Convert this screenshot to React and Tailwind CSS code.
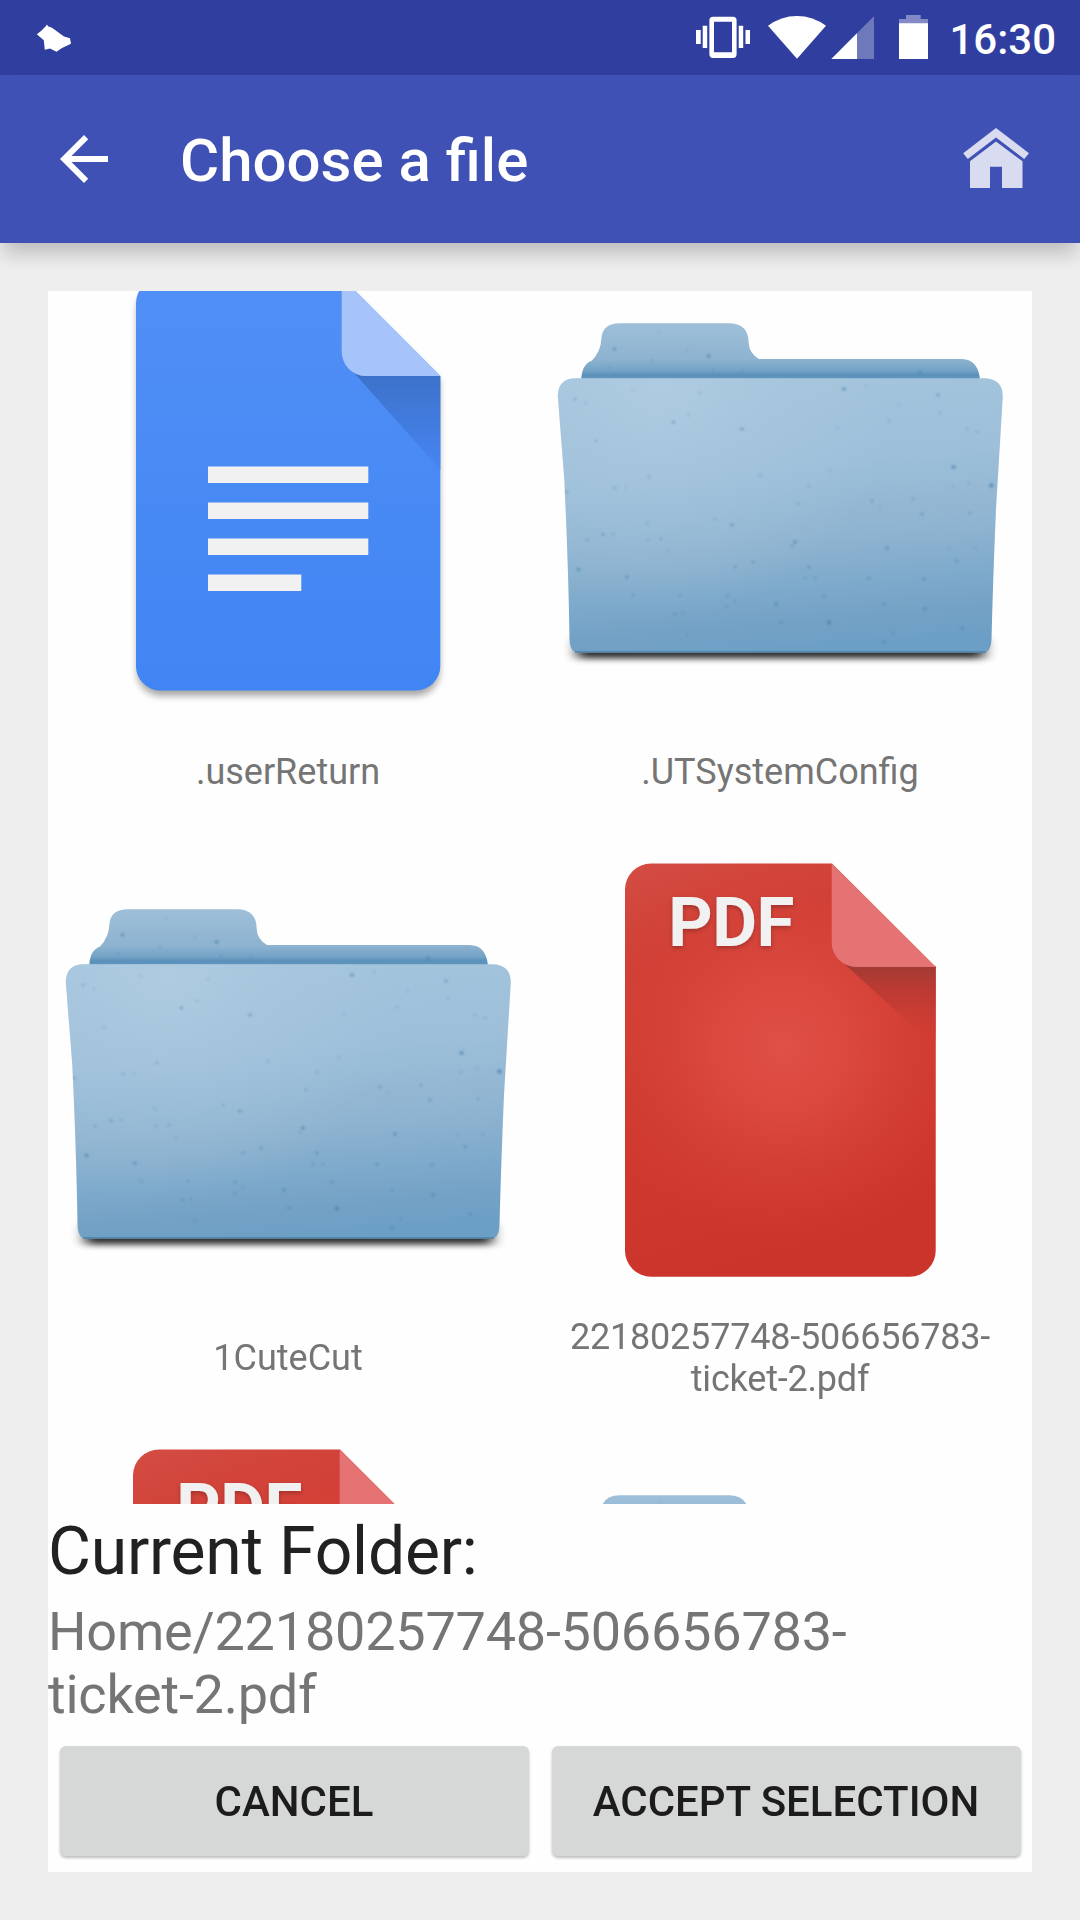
import React from "react";

function StatusBar() {
  return (
    <div className="flex h-[75px] items-start justify-between bg-[#303f9f] pr-[24px]">
      <svg className="ml-[30px] h-[75px] w-[50px]" viewBox="30 0 50 75" fill="#fff">
        <path d="M47 24.5L48 26.2L52 27.8L64 36.5L70 38.3L71 43.8L62 48L56.5 51.7L50 48.6L44.8 49.8L43.8 40.3L36.8 34.2L41 31L45.5 26.6Z" />
      </svg>
      <div className="flex">
        <svg className="h-[75px] w-[240px]" viewBox="690 0 240 75" fill="#fff">
          <path d="M696 30h4.7v14H696zM702.7 25.7h4.5V48h-4.5zM738.7 25.7h4.5V48h-4.5zM745.5 30h4.5v14h-4.5z" />
          <path fillRule="evenodd" d="M713 16.7h20a3.6 3.6 0 0 1 3.6 3.6v34a3.6 3.6 0 0 1-3.6 3.6h-20a3.6 3.6 0 0 1-3.6-3.6v-34a3.6 3.6 0 0 1 3.6-3.6zM714 21.7v30.6h18V21.7z" />
          <path d="M768 25.8Q781 16 797 16T826 25.8L797 58.8Z" />
          <path d="M874 16.3V59H831.3Z" opacity="0.3" />
          <path d="M857 33.3V59H831.3Z" />
          <path d="M906 15h14.7v4H928v5h-29v-5h7z" opacity="0.4" />
          <path d="M899 23.3h29V59h-29z" />
        </svg>
        <span className="ml-[19px] mt-[15px] text-[42px] leading-[49px] font-medium text-white">16:30</span>
      </div>
    </div>
  );
}

function AppBar() {
  return (
    <header className="relative z-10 flex h-[168px] items-center bg-[#3f51b5] shadow-[0_14px_18px_-3px_rgba(0,0,0,0.2)]">
      <svg className="ml-[48px] size-[72px]" viewBox="0 0 24 24" fill="#fff">
        <path d="M20 11H7.83l5.59-5.59L12 4l-8 8 8 8 1.41-1.41L7.83 13H20v-2z" />
      </svg>
      <h1 className="ml-[60px] mt-[4px] text-[60px] leading-[70px] font-medium text-white">Choose a file</h1>
      <svg className="mr-[48px] ml-auto h-[168px] w-[72px]" viewBox="960 75 72 168" fill="#d9dcf0">
        <path d="M996 128L1029 153.3L1024.2 159L996 137.4L967.8 159L963.2 153.3Z" />
        <path d="M996 141.5L1022.5 161.3V188H1002V166.8H990V188H970V161.3Z" />
      </svg>
    </header>
  );
}

function DocIcon() {
  return (
    <svg className="h-[460px] w-[492px]" viewBox="0 0 492 460">
      <defs>
        <linearGradient id="docFill" x1="0" y1="0" x2="0" y2="1">
          <stop offset="0" stopColor="#508ff5" />
          <stop offset="1" stopColor="#4185f4" />
        </linearGradient>
        <linearGradient id="docFold" x1="0" y1="0" x2="0" y2="1">
          <stop offset="0" stopColor="#3c71c8" />
          <stop offset="1" stopColor="#4685f2" />
        </linearGradient>
        <filter id="docBlur" x="-10%" y="-10%" width="120%" height="120%">
          <feGaussianBlur stdDeviation="3.5" />
        </filter>
      </defs>
      <path d="M112 38H296L391.5 132V422A24 24 0 0 1 367 447H113A24 24 0 0 1 89 422V62A24 24 0 0 1 112 38Z" fill="#000" opacity="0.34" filter="url(#docBlur)" />
      <path d="M112 30H295.5L392.3 127V417A24.5 24.5 0 0 1 368 441.5H112.5A24.5 24.5 0 0 1 88 417V54A24 24 0 0 1 112 30Z" fill="url(#docFill)" />
      <path d="M304.5 122L392.3 127V221Z" fill="url(#docFold)" />
      <path d="M293.7 30H295.5L392.3 127H318A24.3 24.3 0 0 1 293.7 102.7Z" fill="#a6c4fa" />
      <path d="M160 217.5H320.3V234H160ZM160 253.5H320.3V270H160ZM160 289.5H320.3V306H160ZM160 325.5H253.3V342H160Z" fill="#f1f1f1" />
    </svg>
  );
}

function PdfIcon() {
  return (
    <svg className="h-[460px] w-[492px]" viewBox="0 0 492 460">
      <defs>
        <linearGradient id="pdfFill" x1="0" y1="0" x2="0.25" y2="1">
          <stop offset="0" stopColor="#d44c42" />
          <stop offset="0.25" stopColor="#cf4036" />
          <stop offset="0.6" stopColor="#cf3a30" />
          <stop offset="1" stopColor="#cb342b" />
        </linearGradient>
        <radialGradient id="pdfGlow" gradientUnits="userSpaceOnUse" cx="243" cy="212" r="200">
          <stop offset="0" stopColor="#e05046" />
          <stop offset="0.35" stopColor="#dc4a40" stopOpacity="0.85" />
          <stop offset="0.7" stopColor="#d74238" stopOpacity="0.45" />
          <stop offset="1" stopColor="#d43b31" stopOpacity="0" />
        </radialGradient>
        <linearGradient id="pdfFold" x1="0" y1="0" x2="0" y2="1">
          <stop offset="0" stopColor="#9c3b35" />
          <stop offset="0.3" stopColor="#b83a33" />
          <stop offset="0.85" stopColor="#d03c32" stopOpacity="0.5" />
          <stop offset="1" stopColor="#d03c32" stopOpacity="0" />
        </linearGradient>
        <filter id="pdfTextShadow" x="-10%" y="-20%" width="120%" height="150%">
          <feDropShadow dx="0" dy="2" stdDeviation="2" floodColor="#000" floodOpacity="0.25" />
        </filter>
      </defs>
      <path d="M111 28.5H292L395.7 132V416A26 26 0 0 1 370 441.7H111A26 26 0 0 1 85 416V54A26 26 0 0 1 111 28.5Z" fill="url(#pdfFill)" />
      <path d="M111 28.5H292L395.7 132V416A26 26 0 0 1 370 441.7H111A26 26 0 0 1 85 416V54A26 26 0 0 1 111 28.5Z" fill="url(#pdfGlow)" />
      <path d="M300 125L395.7 131V212Z" fill="url(#pdfFold)" />
      <path d="M291.7 28.5L395.7 132H316A24.5 24.5 0 0 1 291.7 107.5Z" fill="#e57373" />
      <text x="128.3" y="110.8" fontSize="69" fontWeight="700" textLength="126" fill="#f1f1f1" filter="url(#pdfTextShadow)">PDF</text>
    </svg>
  );
}

// Paper flecks on the folder: x, y, radius, opacity.
const FLECKS = [
  [74.5, 100, 1.8, 0.7], [168.5, 107, 1.9, 0.8], [147, 102, 1.5, 0.3], [112, 112, 1.3, 0.4],
  [173, 121, 1.3, 0.45], [70, 119, 1.2, 0.4], [119, 83, 1.2, 0.3], [380, 123, 1.9, 0.65],
  [203, 122, 1.4, 0.35], [304, 140, 2, 0.7], [398, 146, 1.8, 0.55], [326, 137, 1.5, 0.25],
  [133.5, 173, 1.8, 0.55], [149, 166, 1.4, 0.3], [202, 180, 1.9, 0.55], [56, 192, 1.3, 0.4],
  [35, 150, 1.7, 0.35], [46, 154, 1.4, 0.25], [93, 141, 1.4, 0.2], [160, 144, 1.3, 0.25],
  [413.5, 218, 2.3, 0.7], [451.5, 236.5, 2.3, 0.85], [297, 179, 1.4, 0.25], [349, 172, 1.4, 0.3],
  [400, 164, 1.5, 0.3], [427, 180, 1.4, 0.3], [437, 183, 1.4, 0.3], [109, 228, 1.6, 0.35],
  [75, 239, 1.5, 0.45], [86, 239, 1.2, 0.25], [220, 226, 1.6, 0.3], [258, 255, 1.6, 0.35],
  [332, 252, 1.6, 0.5], [340, 258, 1.2, 0.3], [373, 250, 1.5, 0.45], [382, 265, 1.9, 0.45],
  [430, 264, 1.7, 0.35], [192, 276, 1.8, 0.6], [175, 270, 1.5, 0.35], [107, 274, 1.6, 0.25],
  [63, 285.5, 1.7, 0.5], [73, 285, 1.3, 0.35], [47, 291, 1.5, 0.45], [108, 291, 1.4, 0.35],
  [121, 290, 1.5, 0.4], [255, 293, 2, 0.65], [252, 297, 1.6, 0.4], [347, 299, 2.1, 0.5],
  [409, 300, 1.4, 0.35], [435, 299, 1.4, 0.3], [417, 312, 1.7, 0.55], [38.5, 320.5, 2, 0.7],
  [87, 328, 1.9, 0.55], [195, 318, 1.6, 0.45], [213, 313, 1.8, 0.45], [269, 318, 1.8, 0.55],
  [265, 329, 1.5, 0.4], [275, 329, 1.5, 0.4], [329, 329.5, 1.9, 0.45], [384, 330, 1.7, 0.5],
  [93, 346, 1.5, 0.4], [140, 346, 1.5, 0.45], [187, 347, 1.6, 0.5], [195, 352, 1.4, 0.35],
  [284, 347, 1.7, 0.45], [236, 355, 1.9, 0.6], [187, 358, 1.5, 0.45], [135, 365, 1.5, 0.5],
  [143, 364, 1.3, 0.35], [344, 355, 1.6, 0.45], [385, 360, 2, 0.6], [241, 373, 1.7, 0.5],
  [289, 373.5, 2.2, 0.8], [422, 379, 1.8, 0.55], [344, 393, 1.8, 0.65], [353, 384, 1.4, 0.35],
  [147, 386, 1.3, 0.4], [128, 302, 1.3, 0.3], [291, 222, 1.3, 0.25], [269, 237, 1.4, 0.3],
  [413, 237, 1.3, 0.3], [429, 234, 1.3, 0.3], [26.5, 243, 1.5, 0.5], [359, 156, 1.3, 0.25],
];

const FOLDER_FRONT =
  "M17.8 147Q18 129.3 36 129.3H445Q463 130 462.8 148L456 260Q453 330 451.5 390Q451 403.7 443 403.7H37.5Q30 403 29.5 390Q28.5 320 24.3 230Z";

function FolderIcon() {
  return (
    <svg className="h-[460px] w-[492px]" viewBox="0 0 492 460">
      <defs>
        <linearGradient id="folderBack" gradientUnits="userSpaceOnUse" x1="0" y1="74" x2="0" y2="130">
          <stop offset="0" stopColor="#9fbfd9" />
          <stop offset="0.65" stopColor="#8db3d0" />
          <stop offset="0.85" stopColor="#74a3c6" />
          <stop offset="0.93" stopColor="#5990ba" />
          <stop offset="1" stopColor="#6297be" />
        </linearGradient>
        <linearGradient id="folderFront" gradientUnits="userSpaceOnUse" x1="225" y1="115" x2="248" y2="404">
          <stop offset="0" stopColor="#a5c5dd" />
          <stop offset="0.35" stopColor="#9dbfd9" />
          <stop offset="0.6" stopColor="#8fb4d1" />
          <stop offset="0.72" stopColor="#84adcc" />
          <stop offset="0.8" stopColor="#7ba8cb" />
          <stop offset="0.9" stopColor="#73a1c5" />
          <stop offset="1" stopColor="#6c9fc5" />
        </linearGradient>
        <radialGradient id="folderShine" gradientUnits="userSpaceOnUse" cx="120" cy="140" r="230">
          <stop offset="0" stopColor="#b4cfe3" stopOpacity="0.6" />
          <stop offset="0.5" stopColor="#b0cce1" stopOpacity="0.3" />
          <stop offset="1" stopColor="#b0cce1" stopOpacity="0" />
        </radialGradient>
        <filter id="folderBlur" x="-5%" y="-80%" width="110%" height="260%">
          <feGaussianBlur stdDeviation="7 3" />
        </filter>
        <filter id="fleckBlur">
          <feGaussianBlur stdDeviation="0.8" />
        </filter>
      </defs>
      <rect x="37" y="390" width="407" height="19.5" fill="#000" opacity="0.82" filter="url(#folderBlur)" />
      <path d="M41.3 132Q41 116 52 111.5Q61 102 61.3 90Q62 74.3 80 74.3H190Q208.500 75 208.700 94Q209 104 219 110H422Q437 110.500 439.700 128V132Z" fill="url(#folderBack)" />
      <path d={FOLDER_FRONT} fill="url(#folderFront)" />
      <path d={FOLDER_FRONT} fill="url(#folderShine)" />
      <path d="M35 403H446" stroke="#4f809f" strokeWidth="1.5" />
      <g fill="#3f7da9" opacity="0.8" filter="url(#fleckBlur)">
        {FLECKS.map(([x, y, r, o]) => (
          <ellipse key={`${x}-${y}`} cx={x} cy={y} rx={r} ry={r * 0.9} opacity={o} />
        ))}
      </g>
    </svg>
  );
}

function FileCell({ icon, name, tracking = "" }) {
  return (
    <div className="flex h-[586px] flex-col">
      {icon}
      <div className={`flex h-[126px] items-center justify-center pr-[12px] text-center text-[36px] leading-[42px] text-[#757575] ${tracking}`}>
        <span className="whitespace-pre-line">{name}</span>
      </div>
    </div>
  );
}

function BarButton({ children }) {
  return (
    <button className="h-[110px] flex-1 rounded-[6px] bg-[#d6d8d7] text-[42px] leading-[49px] font-medium text-[#1c1c1c] shadow-[0_2px_3px_rgba(0,0,0,0.26)]">
      {children}
    </button>
  );
}

export default function App() {
  return (
    <div className="flex h-[1920px] w-[1080px] flex-col overflow-hidden bg-[#eeeeee] font-['Roboto',sans-serif]">
      <StatusBar />
      <AppBar />
      <main className="mx-[48px] mt-[48px] flex h-[1581px] flex-col bg-[#fefefe]">
        <div className="h-[1213px] shrink-0 overflow-hidden">
          <div className="-mt-[42px] grid grid-cols-2">
            <FileCell icon={<DocIcon />} name=".userReturn" />
            <FileCell icon={<FolderIcon />} name=".UTSystemConfig" />
            <FileCell icon={<FolderIcon />} name="1CuteCut" />
            <FileCell icon={<PdfIcon />} name={"22180257748-506656783-\nticket-2.pdf"} tracking="tracking-[-0.2px]" />
            <FileCell icon={<PdfIcon />} />
            <FileCell icon={<FolderIcon />} />
          </div>
        </div>
        <h2 className="mt-[9px] text-[66px] leading-[78px] tracking-[-0.22px] text-[#212121]">Current Folder:</h2>
        <p className="mt-[9px] text-[54px] leading-[63px] tracking-[-0.22px] text-[#757575]">
          Home/22180257748-506656783-
          <br />
          ticket-2.pdf
        </p>
        <div className="mt-auto mb-[16px] flex gap-[23px] px-[11.5px]">
          <BarButton>CANCEL</BarButton>
          <BarButton>ACCEPT SELECTION</BarButton>
        </div>
      </main>
    </div>
  );
}
